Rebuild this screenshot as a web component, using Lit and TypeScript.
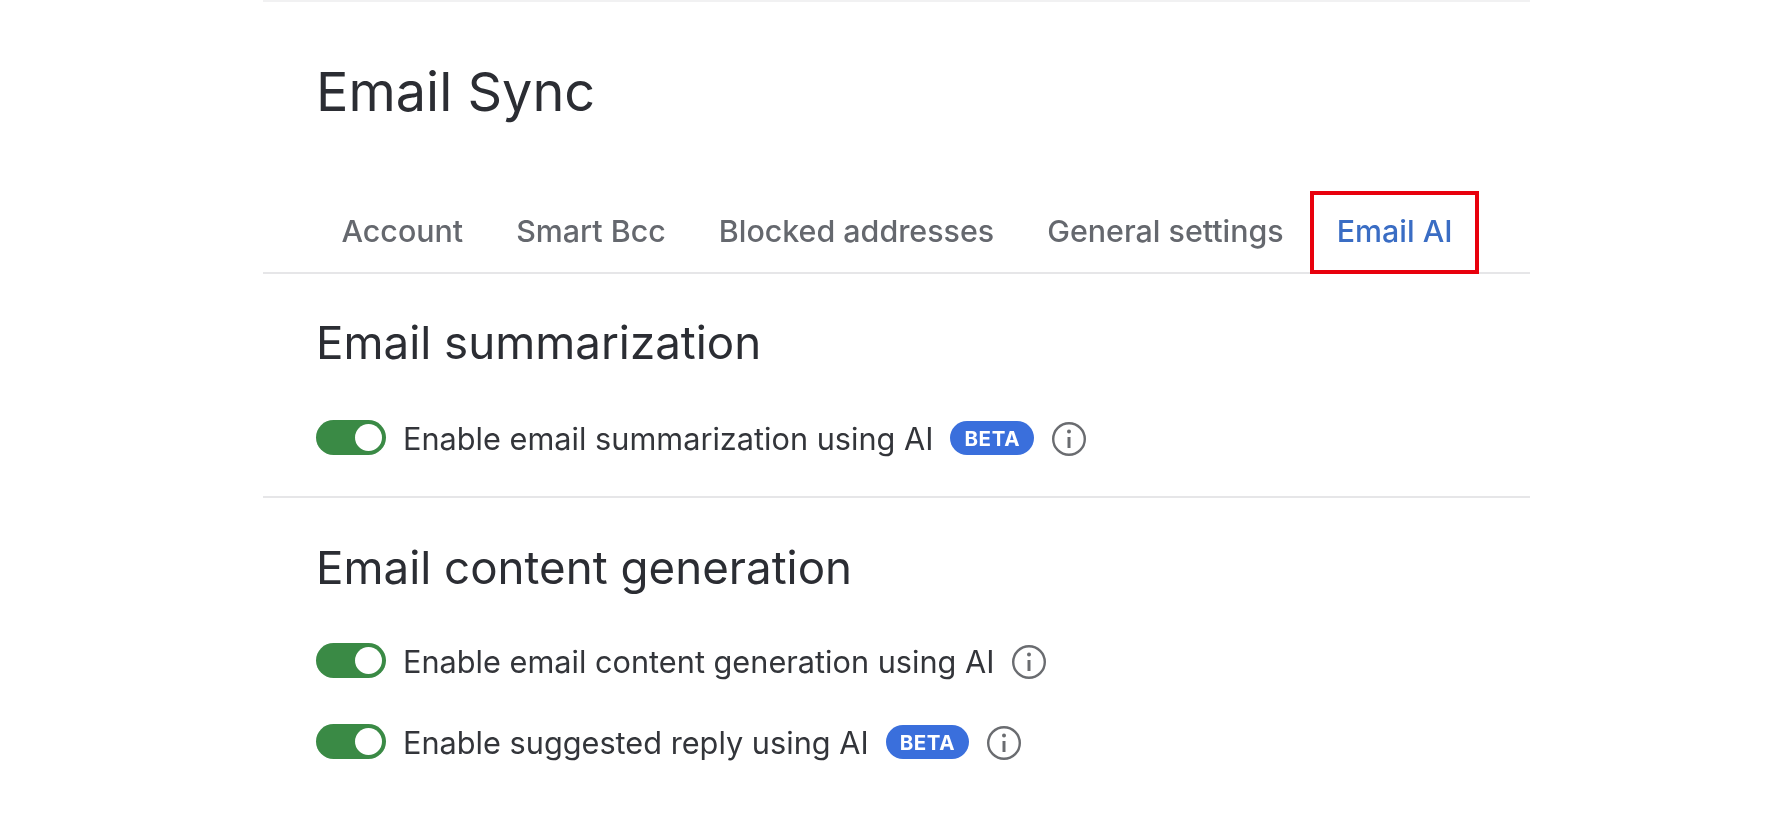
import { LitElement, html, css } from "lit";
import { customElement } from "lit/decorators.js";

const tabs = ["Account", "Smart Bcc", "Blocked addresses", "General settings", "Email AI"];

@customElement("app-root")
export class AppRoot extends LitElement {
  static styles = css`
    :host {
      display: block;
      min-height: 827px;
      background: #fff;
      font-family: Inter, "Noto Sans", sans-serif;
      color: #2b2d33;
    }
    .page {
      width: 1267px;
      margin-left: 263px;
      border-top: 2px solid #f1f1f2;
      filter: blur(0.5px);
    }
    h1 {
      margin: 0;
      padding: 58px 0 0 53px;
      font-size: 54px;
      line-height: 64px;
      font-weight: 400;
    }
    .tabs {
      display: flex;
      margin-top: 67px;
      padding-left: 52px;
      height: 81px;
      border-bottom: 2px solid #e6e6e8;
    }
    .tab {
      position: relative;
      display: flex;
      align-items: center;
      padding: 0 26.5px 2px;
      font-size: 30.4px;
      color: #65686e;
      font-weight: 450;
    }
    .tab.active {
      color: #3a6dc4;
    }
    .tab.active::after {
      content: "";
      position: absolute;
      inset: 0 0 -2px 0;
      border: 4px solid #e8000d;
    }
    section {
      padding: 0 0 0 53px;
    }
    section + section {
      border-top: 2px solid #e6e6e8;
    }
    h2 {
      margin: 0;
      font-size: 45.7px;
      line-height: 52px;
      font-weight: 400;
      padding-top: 43px;
    }
    section + section h2 {
      padding-top: 44px;
    }
    .row {
      display: flex;
      align-items: center;
      height: 36px;
      margin-top: 51px;
      font-size: 30.7px;
      color: #33353a;
    }
    section + section .row {
      margin-top: 49px;
    }
    section + section .row + .row {
      margin-top: 45px;
    }
    .last {
      height: 40px;
    }
    .toggle {
      position: relative;
      width: 70px;
      height: 35px;
      border-radius: 18px;
      background: #3a8a45;
      margin: 0 17px 2px 0;
      flex: none;
    }
    .toggle::after {
      content: "";
      position: absolute;
      right: 4px;
      top: 4px;
      width: 27px;
      height: 27px;
      border-radius: 50%;
      background: #fff;
    }
    .beta {
      display: flex;
      align-items: center;
      justify-content: center;
      height: 34px;
      padding: 0 14px;
      margin-left: 17px;
      border-radius: 17px;
      background: #3a6fdc;
      color: #fff;
      font-size: 20.5px;
      font-weight: 700;
      letter-spacing: 0.6px;
    }
    svg {
      display: block;
      width: 36px;
      height: 36px;
      margin: 2px 0 0 17px;
      color: #6a6c70;
    }
  `;

  info() {
    return html`<svg viewBox="0 0 36 36" fill="none" stroke="currentColor" stroke-width="2.4">
      <circle cx="18" cy="18" r="15.8"></circle>
      <path d="M18 16v11" stroke-width="3"></path>
      <circle cx="18" cy="10.5" r="2" fill="currentColor" stroke="none"></circle>
    </svg>`;
  }

  row(label: string, beta: boolean) {
    return html`<div class="row">
      <span class="toggle"></span>
      <span>${label}</span>
      ${beta ? html`<span class="beta">BETA</span>` : ""}
      ${this.info()}
    </div>`;
  }

  render() {
    return html`<div class="page">
      <h1>Email Sync</h1>
      <div class="tabs">
        ${tabs.map(
          (t) => html`<div class="tab ${t === "Email AI" ? "active" : ""}">${t}</div>`,
        )}
      </div>
      <section>
        <h2>Email summarization</h2>
        ${this.row("Enable email summarization using AI", true)}
        <div class="last"></div>
      </section>
      <section>
        <h2>Email content generation</h2>
        ${this.row("Enable email content generation using AI", false)}
        ${this.row("Enable suggested reply using AI", true)}
      </section>
    </div>`;
  }
}
